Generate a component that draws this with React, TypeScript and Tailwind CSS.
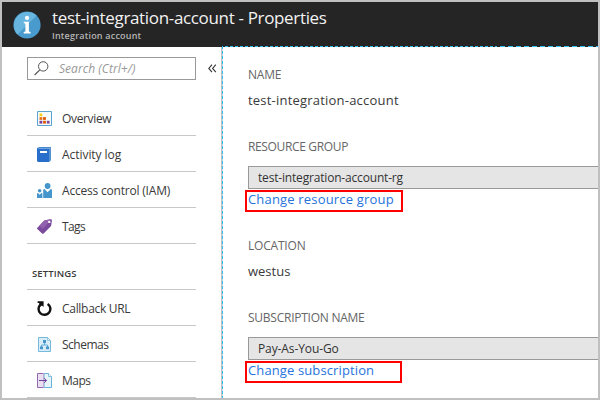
import type { ReactNode } from "react";

function InfoIcon() {
  return (
    <svg className="block h-7 w-7" viewBox="0 0 28 28">
      <circle cx="14" cy="14" r="13.6" fill="#4a9bcd" />
      <path d="M4.4 23.6A13.6 13.6 0 0 1 23.6 4.4z" fill="#68b6df" />
      <circle cx="14" cy="6.9" r="2.1" fill="#fff" />
      <path d="M10.8 10.8h5.1v9.6l1.7.7v1.3h-6.9v-1.3l1.7-.7v-7.7l-1.6-.6z" fill="#fff" />
    </svg>
  );
}

function SearchIcon() {
  return (
    <svg className="block h-[15px] w-[15px]" viewBox="0 0 15 15" fill="none" stroke="#555" strokeWidth="1">
      <circle cx="9.2" cy="5.4" r="4.7" />
      <path d="M5.8 8.8.6 14" strokeWidth="1.2" />
    </svg>
  );
}

function OverviewIcon() {
  return (
    <svg className="block h-[15px] w-[15px]" viewBox="0 0 15 15">
      <path d="M.5.5h14v14H.5z" fill="#f7fafc" stroke="#5aa3cf" />
      <path d="M2.5 2.5h2.8v2.8H2.5z" fill="#fcd116" />
      <path d="M2.5 6.1h2.8v2.8H2.5z" fill="#e8721c" />
      <path d="M6.1 6.1h2.8v2.8H6.1z" fill="#dd5900" />
      <path d="M2.5 9.8h2.8v2.8H2.5z" fill="#7a3f98" />
      <path d="M6.1 9.8h2.8v2.8H6.1z" fill="#dd5900" />
      <path d="M9.8 9.8h2.8v2.8H9.8z" fill="#804998" />
    </svg>
  );
}

function LogIcon() {
  return (
    <svg className="block h-[15px] w-[15px]" viewBox="0 0 15 15">
      <path d="M1 1 2.2 0H14v13l-1.2 2z" fill="#5590cf" />
      <path d="M0 1.4Q0 .8.8.8H12v14.1H1.2Q0 14.9 0 13.8z" fill="#286fcb" />
      <path d="M1.3 1.5H13" stroke="#8bb9e8" strokeWidth=".7" />
      <path d="M3 4h7v2H3z" fill="#fff" />
    </svg>
  );
}

function AccessIcon() {
  return (
    <svg className="block h-[15px] w-[15px]" viewBox="0 0 15 15" fill="#4596ca">
      <circle cx="10.6" cy="3" r="2.9" />
      <path d="M6.2 7.2Q6.2 6 7.4 6l3.2 3.3L13.7 6Q15 6 15 7.3V15H6.2z" />
      <circle cx="2.6" cy="7.8" r="1.8" />
      <path d="M0 10.8Q0 10 1 10l1.7 1.7L4.4 10q1 0 1 .8V15H0z" />
    </svg>
  );
}

function TagIcon() {
  return (
    <svg className="block h-[15px] w-[15px]" viewBox="0 0 15 15">
      <path d="M.4 8.8 7.3 1.6 13.5.3Q15 .2 14.9 1.8l-.8 5.3-7.5 7.4q-.8.7-1.5-.1L.3 10.1q-.6-.6.1-1.3z" fill="#7a4a9d" />
      <path d="m2.4 6.8 4.9-5.2L13.5.3q.7 0 1 .4L5.8 10z" fill="#9262ae" />
      <circle cx="12.3" cy="2.9" r="1.2" fill="#fff" />
    </svg>
  );
}

function CallbackIcon() {
  return (
    <svg className="block h-[15px] w-[15px]" viewBox="0 0 15 15">
      <path d="M3.4 3.6A5.9 5.9 0 1 0 10.6 2.9" fill="none" stroke="#111" strokeWidth="2.4" />
      <path d="M.6.2h6v5.9L4.9 4.4 3.4 5.8 2 2H.6z" fill="#111" />
    </svg>
  );
}

function SchemaIcon() {
  return (
    <svg className="block h-[15px] w-[15px]" viewBox="0 0 15 15">
      <path d="M1.5.5h9l3 3v11h-12z" fill="#d8edf8" stroke="#75b9dd" />
      <path d="M10.5.5v3h3z" fill="#fff" stroke="#75b9dd" strokeWidth=".7" />
      <path d="M7.5 5v3M4.5 10V8h6v2" fill="none" stroke="#5aa9d6" strokeWidth=".9" />
      <path d="M6 3h3v3H6zM3 9.5h3v2.7H3zM9 9.5h3v2.7H9z" fill="#4596ca" />
    </svg>
  );
}

function MapIcon() {
  return (
    <svg className="block h-[15px] w-[15px]" viewBox="0 0 15 15">
      <path d="M7 .5h4.5l3 3v11H7z" fill="#e7f4fa" stroke="#6bb3d8" />
      <path d="M11.5.5v3h3" fill="#fff" stroke="#6bb3d8" strokeWidth=".8" />
      <path d="M6.5.5h-6v14h6" fill="#e9dff0" stroke="#9468af" />
      <path d="M6.5 1v13" stroke="#b9a0cc" strokeWidth=".8" />
      <path d="M2 7.5h7.5M7.2 5.2l2.4 2.3-2.4 2.3" fill="none" stroke="#70409a" />
    </svg>
  );
}

function MenuItem({ icon, label, tracking }: { icon: ReactNode; label: string; tracking: string }) {
  return (
    <li className="flex h-9 items-center border-b border-[#c8c8c8] pt-px pl-[10px]">
      {icon}
      <span className={`ml-[10px] pt-px text-[12px] leading-4 ${tracking}`}>{label}</span>
    </li>
  );
}

function Field({ value, tracking }: { value: string; tracking: string }) {
  return (
    <div className={`h-[23px] border border-r-0 border-[#999] bg-[#e5e5e5] pl-[9px] text-[12px] leading-[22px] text-[#333] ${tracking}`}>
      {value}
    </div>
  );
}

export default function App() {
  return (
    <div className="flex h-[400px] w-[600px] flex-col overflow-hidden border-2 border-[#c0c0c0] bg-white font-['Open_Sans','Noto_Sans',sans-serif] whitespace-nowrap text-[#3a3a3a]">
      <header className="flex h-[45px] shrink-0 bg-[#252525] pt-[9px] pl-[11px]">
        <InfoIcon />
        <div className="-mt-[3px] ml-[11px]">
          <h1 className="text-[17px] leading-[20px] tracking-[-0.34px] text-[#f2f2f2]">test-integration-account - Properties</h1>
          <p className="mt-[2px] text-[9px] leading-[12px] font-semibold tracking-[0.2px] text-[#b5b5b5]">Integration account</p>
        </div>
      </header>

      <div className="flex min-h-0 flex-1">
        <aside className="w-[219px] shrink-0 pl-[25px]">
          <div className="flex pt-[10px]">
            <div className="flex h-[23px] w-[169px] items-center border border-[#999] pl-[6px]">
              <SearchIcon />
              <span className="ml-[10px] text-[12px] leading-4 tracking-[0.05px] text-[#999] italic">Search (Ctrl+/)</span>
            </div>
            <svg className="mt-[7px] ml-3 block h-[9px] w-[9px]" viewBox="0 0 9 9" fill="none" stroke="#333" strokeWidth="1.1">
              <path d="M4 .6.8 4.4 4 8.2M7.8.6 4.6 4.4l3.2 3.8" />
            </svg>
          </div>
          <ul className="mt-5 w-[169px]">
            <MenuItem icon={<OverviewIcon />} label="Overview" tracking="tracking-[-0.35px]" />
            <MenuItem icon={<LogIcon />} label="Activity log" tracking="tracking-[-0.05px]" />
            <MenuItem icon={<AccessIcon />} label="Access control (IAM)" tracking="tracking-[-0.2px]" />
            <MenuItem icon={<TagIcon />} label="Tags" tracking="tracking-[-0.6px]" />
          </ul>
          <h2 className="h-[46px] w-[169px] border-b border-[#c8c8c8] pt-[22px] pl-[5px] text-[9.5px] leading-4 font-semibold tracking-[0.1px]">SETTINGS</h2>
          <ul className="w-[169px]">
            <MenuItem icon={<CallbackIcon />} label="Callback URL" tracking="tracking-[-0.3px]" />
            <MenuItem icon={<SchemaIcon />} label="Schemas" tracking="tracking-[-0.5px]" />
            <MenuItem icon={<MapIcon />} label="Maps" tracking="tracking-[-0.5px]" />
          </ul>
        </aside>

        <div className="-mt-px flex min-w-0 flex-1">
          <div className="mt-px w-px bg-[#c0c0c0]" />
          <div className="w-px bg-[repeating-linear-gradient(to_bottom,#33bdf2_0_3px,#c4dce6_3px_5px)]" />
          <main className="min-w-0 flex-1">
            <div className="flex h-px">
              <div className="w-[274px] bg-[repeating-linear-gradient(to_right,#252525_0_2px,#33bdf2_2px_5px)]" />
              <div className="flex-1 bg-[repeating-linear-gradient(to_right,#252525_0_3px,#33bdf2_3px_8px)]" />
            </div>
            <div className="pl-[25px]">
              <h3 className="pt-5 text-[12px] leading-4 tracking-[-0.2px] text-[#666]">NAME</h3>
              <p className="mt-[9px] text-[13px] leading-4 tracking-[0.21px]">test-integration-account</p>
              <h3 className="mt-[31px] text-[12px] leading-4 tracking-[-0.35px] text-[#666]">RESOURCE GROUP</h3>
              <div className="mt-[11px]">
                <Field value="test-integration-account-rg" tracking="tracking-[-0.18px]" />
              </div>
              <a className="mt-px -ml-[3px] block h-[22px] w-[158px] border-2 border-[#f00] pl-px text-[13px] leading-[15px] tracking-[0.18px] text-[#2673dc]">Change resource group</a>
              <h3 className="mt-[26px] text-[12px] leading-4 tracking-[-0.2px] text-[#666]">LOCATION</h3>
              <p className="mt-[9px] text-[13px] leading-4">westus</p>
              <h3 className="mt-[31px] text-[12px] leading-4 tracking-[-0.25px] text-[#666]">SUBSCRIPTION NAME</h3>
              <div className="mt-[11px]">
                <Field value="Pay-As-You-Go" tracking="tracking-[-0.1px]" />
              </div>
              <a className="mt-px -ml-[3px] block h-[22px] w-[157px] border-2 border-[#f00] pl-px text-[13px] leading-[15px] tracking-[0.12px] text-[#2673dc]">Change subscription</a>
            </div>
          </main>
        </div>
      </div>
    </div>
  );
}
